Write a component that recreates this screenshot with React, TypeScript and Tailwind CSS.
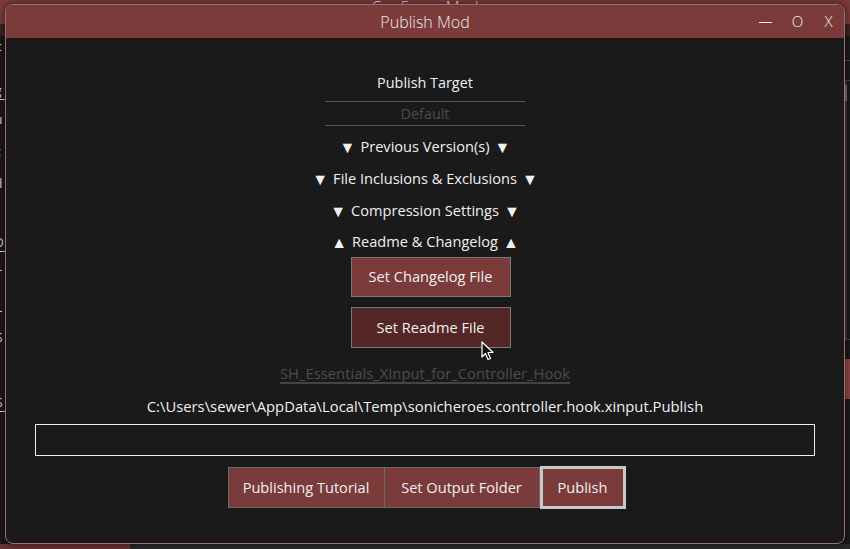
import React from 'react';

const font = { fontFamily: '"Open Sans", "Noto Sans", "Liberation Sans", sans-serif' };

function Section({ label, up, h }: { label: string; up?: boolean; h: string }) {
  return (
    <div className={`${h} flex items-center gap-[5px] text-[14.6px] text-[#f0f0f0]`}>
      <span className="text-[16px]">{up ? '▲' : '▼'}</span>
      <span>{label}</span>
      <span className="text-[16px]">{up ? '▲' : '▼'}</span>
    </div>
  );
}

function Cursor() {
  return (
    <svg width="14" height="20" viewBox="0 0 14 20" className="absolute left-[481px] top-[341px]">
      <path d="M1 1 L1 16 L4.5 12.5 L7 18.5 L9.5 17.5 L7 11.5 L12 11.5 Z" fill="#111" stroke="#fff" strokeWidth="1.2" strokeLinejoin="round" />
    </svg>
  );
}

export default function App() {
  return (
    <div className="relative w-[850px] h-[549px] overflow-hidden bg-[#1a1a1a]" style={font}>
      {/* Background app window */}
      <div className="flex flex-col w-full h-full">
        <div className="h-[24px] bg-[#7b3b3b] flex justify-center overflow-hidden">
          <span className="text-[16px] text-[#eee] leading-[14px] font-light">Configure Mod</span>
        </div>
        <div className="h-[12px] bg-[#3d2222]" />
        <div className="flex flex-1">
          <div className="w-[5px] flex flex-col text-[12px] text-[#ddd] leading-[14px] overflow-hidden">
            <div className="mt-[4px] -ml-[4px]">c</div>
            <div className="mt-[30px] -ml-[5px] border-b border-[#ddd] pb-[1px]">g</div>
            <div className="mt-[13px] -ml-[5px]">u</div>
            <div className="mt-[18px] -ml-[5px]">c</div>
            <div className="mt-[18px] -ml-[5px]">d</div>
            <div className="mt-[45px] -ml-[5px] border-b border-[#ddd] pb-[1px]">D</div>
            <div className="mt-[14px] -ml-[3px]">r</div>
            <div className="mt-[21px] -ml-[4px]">L</div>
            <div className="mt-[16px] -ml-[4px]">S</div>
            <div className="mt-[51px] -ml-[4px] border-b border-[#ddd] pb-[1px]">S</div>
          </div>
          <div className="flex-1" />
          <div className="w-[7px] flex flex-col">
            <div className="h-[24px]" />
            <div className="ml-[2px] border-t border-[#444] h-[20px]" />
            <div className="ml-[2px] border-t border-[#444] flex-1 flex">
              <div className="w-[2px] bg-[#3a3a3a] flex flex-col">
                <div className="mt-[4px] h-[16px] bg-[#777]" />
              </div>
            </div>
            <div className="ml-[2px] border-t border-[#444] h-[20px]" />
            <div className="ml-[2px] h-[40px] bg-[#8a4545]" />
            <div className="h-[145px]" />
          </div>
        </div>
        <div className="h-[5px] flex">
          <div className="w-[130px] bg-[#6a3535]" />
          <div className="flex-1 bg-[#2a2a2a]" />
        </div>
      </div>

      {/* Publish Mod window */}
      <div className="absolute left-[5px] top-[4px] w-[840px] h-[540px] rounded-[8px] border border-[#9c7070] bg-[#1a1a1a] overflow-hidden flex flex-col shadow-[0_0_8px_rgba(0,0,0,0.6)]">
        <div className="h-[33px] shrink-0 bg-[#7b3b3b] relative flex items-center justify-center">
          <span className="text-[16px] text-[#ececec] font-light">Publish Mod</span>
          <div className="absolute right-[10px] top-0 h-full flex items-center text-[15px] text-[#eee] font-light">
            <div className="w-[13px] h-[1px] bg-[#eee] mt-[2px]" />
            <span className="ml-[19px] w-[13px] text-center">O</span>
            <span className="ml-[19px] w-[11px] text-center">X</span>
          </div>
        </div>

        <div className="flex flex-col items-center relative">
          <div className="mt-[35px] h-[20px] leading-[20px] text-[14.4px] text-[#f0f0f0]">Publish Target</div>
          <div className="mt-[8px] w-[200px] h-[25px] border-y border-[#555] flex items-center justify-center text-[14.4px] text-[#4a4a4a]">
            Default
          </div>
          <div className="mt-[5px]" />
          <Section label="Previous Version(s)" h="h-[32px]" />
          <Section label="File Inclusions & Exclusions" h="h-[32px]" />
          <Section label="Compression Settings" h="h-[32px]" />
          <Section label="Readme & Changelog" up h="h-[30px]" />
          <button className="ml-[11px] w-[160px] h-[40px] bg-[#7b3b3b] border border-[#7a7a7a] text-[14.6px] text-[#f0f0f0]">
            Set Changelog File
          </button>
          <button className="ml-[11px] mt-[10px] w-[160px] h-[41px] bg-[#552626] border border-[#7a7a7a] text-[14.6px] text-[#f0f0f0]">
            Set Readme File
          </button>
          <div className="mt-[15px] h-[21px] leading-[20px] border-b-2 border-[#444] text-[14.8px] text-[#4c4c4c]">
            SH_Essentials_XInput_for_Controller_Hook
          </div>
          <div className="mt-[12px] h-[20px] leading-[20px] text-[14.8px] text-[#f0f0f0]">
            C:\Users\sewer\AppData\Local\Temp\sonicheroes.controller.hook.xinput.Publish
          </div>
          <div className="mt-[8px] w-[780px] h-[32px] border border-[#f0f0f0]" />
          <div className="mt-[10px] ml-[3px] flex items-center">
            <button className="w-[157px] h-[41px] bg-[#7b3b3b] border border-[#6a6a6a] text-[14.6px] text-[#f0f0f0]">
              Publishing Tutorial
            </button>
            <button className="w-[155px] h-[41px] bg-[#7b3b3b] border border-[#6a6a6a] border-l-0 text-[14.6px] text-[#f0f0f0]">
              Set Output Folder
            </button>
            <button className="w-[86px] h-[43px] bg-[#7b3b3b] border-[3px] border-[#c8c8c8] text-[14.6px] text-[#f0f0f0]">
              Publish
            </button>
          </div>
        </div>
      </div>

      <Cursor />
    </div>
  );
}
